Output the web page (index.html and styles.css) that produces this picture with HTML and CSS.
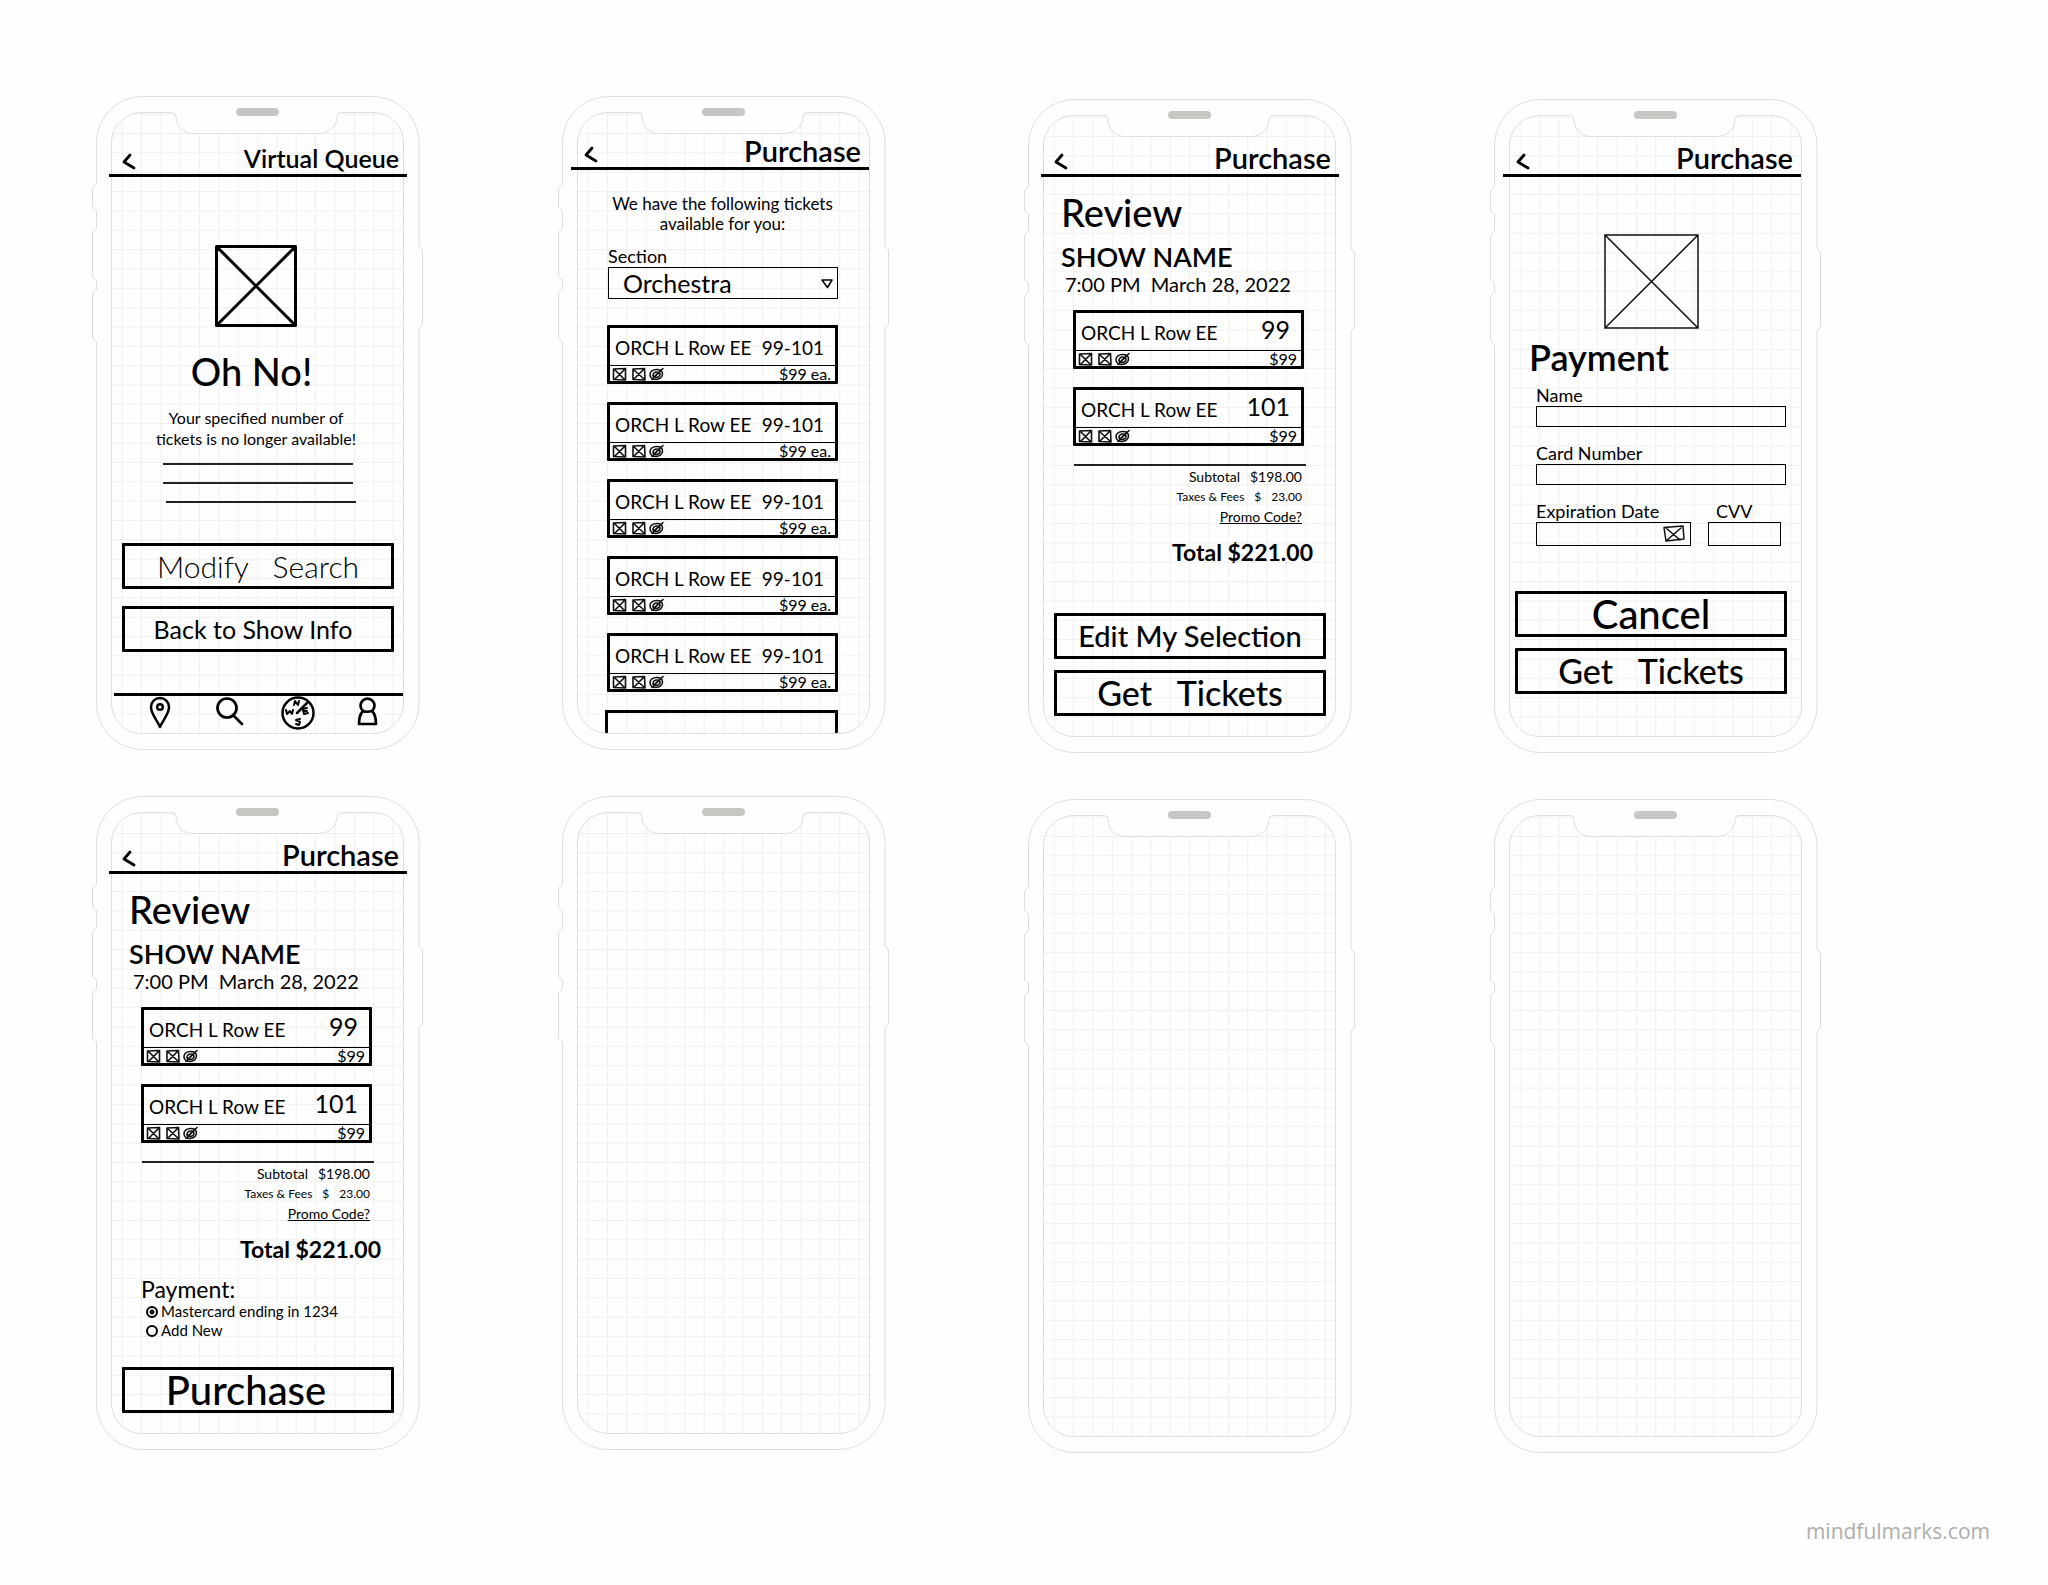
FILE: index.html
```html
<!DOCTYPE html>
<html lang="en">
<head>
<meta charset="utf-8">
<meta name="viewport" content="width=device-width, initial-scale=1">
<title>Ticket purchase wireframes</title>
<link rel="stylesheet" href="styles.css">
</head>
<body>
<svg class="sprite" aria-hidden="true">
  <defs>
    <pattern id="grid" x="25.7" y="75.7" width="19.35" height="19.35" patternUnits="userSpaceOnUse">
      <path d="M.5 0V19.35M0 .5H19.35" fill="none" stroke="#efefed"/>
    </pattern>
  </defs>
  <symbol id="device" viewBox="-5 0 333 655">
    <g fill="none" stroke="#dededc">
      <path d="M47 .5H276C302 .5 323 21 323 47V150L326.500 154V228L323 232V607C323 633 302 653.500 276 653.500H47C21 653.500 .5 633 .5 607V246L-3.500 242V197L.5 193V184L-3.500 181V136L.5 132V115L-3.500 111V92L.5 88V47C.5 21 21 .5 47 .5Z"/>
      <path fill="url(#grid)" d="M46 16.500H76Q80 16.500 80 20.500C80 30 87 37.500 97 37.500H223C233 37.500 241 30 241 20.500Q241 16.500 245 16.500H277C294 16.500 307.500 30 307.500 47V607C307.500 624 294 637.500 277 637.500H46C29 637.500 15.500 624 15.500 607V47C15.500 30 29 16.500 46 16.500Z"/>
    </g>
    <rect x="140" y="12" width="43" height="8" rx="4" fill="#c6c6c3"/>
  </symbol>
  <symbol id="back" viewBox="0 0 14 17">
    <path d="M8 2 2 9l10 6" fill="none" stroke="#000" stroke-width="2.800" stroke-linecap="round" stroke-linejoin="round"/>
  </symbol>
  <symbol id="amenities" viewBox="0 0 52 14">
    <g fill="none" stroke="#111" stroke-width="1.600" stroke-linecap="round" stroke-linejoin="round">
      <path d="M1.500 2 13.500 1.500V13L1.500 12.500ZM2 2l10 10M12 3 3 12M21 2l11.500-.5L33 13 21 12.500ZM22 3l10 9M31 3l-9 9"/>
      <path d="M38 7.500c0-3 3-5 6.500-5s6 1.500 6 4.500-3 5.500-6.500 5.500-6-2-6-5ZM40 12.500 51 1.500M41 9c0-3 2-4 4-4s3 1 3 2.500-2 3-4 3-3-1-3-2.500ZM42 10l5-5"/>
    </g>
  </symbol>
</svg>

<main class="board">

  <section class="phone phone--queue">
    <svg class="device" aria-hidden="true"><use href="#device"/></svg>
    <header class="bar">
      <a class="back" href="#" aria-label="Back"><svg width="14" height="17" aria-hidden="true"><use href="#back"/></svg></a>
      <h2 class="bar-title bar-title--small">Virtual Queue</h2>
    </header>
    <svg class="picture" width="82" height="82" viewBox="0 0 82 82" aria-hidden="true">
      <path d="M1.500 1.500H80.500V80.500H1.500ZM1.500 1.500 80.500 80.500M80.500 1.500 1.500 80.500" fill="none" stroke="#000" stroke-width="3" stroke-linejoin="round"/>
    </svg>
    <h3 class="alert">Oh No!</h3>
    <p class="notice">Your specified number of<br>tickets is no longer available!</p>
    <div class="filler"><span></span><span></span><span></span></div>
    <div class="actions">
      <button class="button button--thin" type="button">Modify &nbsp; Search</button>
      <button class="button button--light" type="button">Back to Show Info</button>
    </div>
    <nav class="tabs">
      <a href="#" aria-label="Venues">
        <svg width="34" height="34" viewBox="0 0 34 34" fill="none" stroke="#000" stroke-width="2.500" stroke-linejoin="round" aria-hidden="true"><path d="M17 31C14 24 8 18 8 11a9 9 0 0 1 18 0c0 7-6 13-9 20Z"/><circle cx="17" cy="11" r="2.800"/></svg>
      </a>
      <a href="#" aria-label="Search">
        <svg width="34" height="34" viewBox="0 0 34 34" fill="none" stroke="#000" stroke-width="2.700" stroke-linecap="round" aria-hidden="true"><circle cx="15" cy="12" r="9.500"/><path d="m21 19 9 9"/></svg>
      </a>
      <a href="#" aria-label="Explore">
        <svg width="34" height="34" viewBox="0 0 34 34" fill="none" stroke="#000" stroke-width="2.500" stroke-linecap="round" stroke-linejoin="round" aria-hidden="true"><circle cx="17" cy="17" r="15.500"/><path d="M16 17 26 7"/><path stroke-width="2" d="m13 9 1-4 3 4 1-4M5 14l1 4 3-3 2 3 1-4M26 12l-4 1 1 5 4-1M22 15h4M19 23l-4 1 4 2-1 3-3-1"/></svg>
      </a>
      <a href="#" aria-label="Account">
        <svg width="34" height="34" viewBox="0 0 34 34" fill="none" stroke="#000" stroke-width="2.700" stroke-linejoin="round" aria-hidden="true"><path d="M13 15a7 7 0 1 1 9 0c3 3 4 8 4 13H9c0-5 1-10 4-13Zm0 0q4 1.500 9 0"/></svg>
      </a>
    </nav>
  </section>

  <section class="phone phone--tickets">
    <svg class="device" aria-hidden="true"><use href="#device"/></svg>
    <header class="bar bar--left">
      <a class="back" href="#" aria-label="Back"><svg width="14" height="17" aria-hidden="true"><use href="#back"/></svg></a>
      <h2 class="bar-title">Purchase</h2>
    </header>
    <p class="intro">We have the following tickets<br>available for you:</p>
    <div class="picker">
      <label for="section">Section</label>
      <div class="select">
        <select id="section"><option>Orchestra</option></select>
        <svg class="caret" width="12" height="10" viewBox="0 0 12 10" aria-hidden="true"><path d="M1 1H11L6.500 8.500Z" fill="none" stroke="#000" stroke-width="1.500" stroke-linejoin="round"/></svg>
      </div>
    </div>
    <ul class="tickets tickets--list">
      <li class="ticket"><div class="seat"><span>ORCH L Row EE</span><span>99-101</span></div><div class="price"><svg width="52" height="14" aria-hidden="true"><use href="#amenities"/></svg><span>$99 ea.</span></div></li>
      <li class="ticket"><div class="seat"><span>ORCH L Row EE</span><span>99-101</span></div><div class="price"><svg width="52" height="14" aria-hidden="true"><use href="#amenities"/></svg><span>$99 ea.</span></div></li>
      <li class="ticket"><div class="seat"><span>ORCH L Row EE</span><span>99-101</span></div><div class="price"><svg width="52" height="14" aria-hidden="true"><use href="#amenities"/></svg><span>$99 ea.</span></div></li>
      <li class="ticket"><div class="seat"><span>ORCH L Row EE</span><span>99-101</span></div><div class="price"><svg width="52" height="14" aria-hidden="true"><use href="#amenities"/></svg><span>$99 ea.</span></div></li>
      <li class="ticket"><div class="seat"><span>ORCH L Row EE</span><span>99-101</span></div><div class="price"><svg width="52" height="14" aria-hidden="true"><use href="#amenities"/></svg><span>$99 ea.</span></div></li>
      <li class="ticket ticket--cut"></li>
    </ul>
  </section>

  <section class="phone phone--low">
    <svg class="device" aria-hidden="true"><use href="#device"/></svg>
    <header class="bar">
      <a class="back" href="#" aria-label="Back"><svg width="14" height="17" aria-hidden="true"><use href="#back"/></svg></a>
      <h2 class="bar-title">Purchase</h2>
    </header>
    <div class="show">
      <h3 class="review">Review</h3>
      <p class="show-name">SHOW NAME</p>
      <p class="show-date">7:00 PM &nbsp;March 28, 2022</p>
    </div>
    <ul class="tickets">
      <li class="ticket"><div class="seat"><span>ORCH L Row EE</span><span class="number">99</span></div><div class="price"><svg width="52" height="14" aria-hidden="true"><use href="#amenities"/></svg><span>$99</span></div></li>
      <li class="ticket"><div class="seat"><span>ORCH L Row EE</span><span class="number">101</span></div><div class="price"><svg width="52" height="14" aria-hidden="true"><use href="#amenities"/></svg><span>$99</span></div></li>
    </ul>
    <div class="receipt">
      <p class="line"><span>Subtotal</span><span>$198.00</span></p>
      <p class="line line--small"><span>Taxes &amp; Fees</span><span>$</span><span>23.00</span></p>
      <p class="line line--promo"><a href="#">Promo Code?</a></p>
      <p class="total">Total $221.00</p>
    </div>
    <div class="actions actions--close">
      <button class="button button--edit" type="button">Edit My Selection</button>
      <button class="button" type="button">Get &nbsp; Tickets</button>
    </div>
  </section>

  <section class="phone phone--low">
    <svg class="device" aria-hidden="true"><use href="#device"/></svg>
    <header class="bar bar--left">
      <a class="back" href="#" aria-label="Back"><svg width="14" height="17" aria-hidden="true"><use href="#back"/></svg></a>
      <h2 class="bar-title">Purchase</h2>
    </header>
    <svg class="picture picture--card" width="95" height="95" viewBox="0 0 95 95" aria-hidden="true">
      <path d="M1 1H94V94H1ZM1 1 94 94M94 1 1 94" fill="none" stroke="#111" stroke-width="1.500"/>
    </svg>
    <h3 class="pay-title">Payment</h3>
    <form class="form">
      <div class="field"><label for="name">Name</label><input id="name" type="text"></div>
      <div class="field"><label for="card">Card Number</label><input id="card" type="text"></div>
      <div class="pair">
        <div class="field field--date"><label for="expiry">Expiration Date</label><input id="expiry" type="text">
          <svg class="calendar" width="22" height="18" viewBox="0 0 22 18" aria-hidden="true"><path d="M1 2.500 20 1l1 13L3 16ZM3 3l14 12M18 3 3 16" fill="none" stroke="#111" stroke-width="1.500" stroke-linejoin="round" stroke-linecap="round"/></svg>
        </div>
        <div class="field field--cvv"><label for="cvv">CVV</label><input id="cvv" type="text"></div>
      </div>
    </form>
    <div class="actions actions--close actions--left">
      <button class="button button--large" type="button">Cancel</button>
      <button class="button" type="button">Get &nbsp; Tickets</button>
    </div>
  </section>

  <section class="phone">
    <svg class="device" aria-hidden="true"><use href="#device"/></svg>
    <header class="bar">
      <a class="back" href="#" aria-label="Back"><svg width="14" height="17" aria-hidden="true"><use href="#back"/></svg></a>
      <h2 class="bar-title">Purchase</h2>
    </header>
    <div class="show">
      <h3 class="review">Review</h3>
      <p class="show-name">SHOW NAME</p>
      <p class="show-date">7:00 PM &nbsp;March 28, 2022</p>
    </div>
    <ul class="tickets">
      <li class="ticket"><div class="seat"><span>ORCH L Row EE</span><span class="number">99</span></div><div class="price"><svg width="52" height="14" aria-hidden="true"><use href="#amenities"/></svg><span>$99</span></div></li>
      <li class="ticket"><div class="seat"><span>ORCH L Row EE</span><span class="number">101</span></div><div class="price"><svg width="52" height="14" aria-hidden="true"><use href="#amenities"/></svg><span>$99</span></div></li>
    </ul>
    <div class="receipt">
      <p class="line"><span>Subtotal</span><span>$198.00</span></p>
      <p class="line line--small"><span>Taxes &amp; Fees</span><span>$</span><span>23.00</span></p>
      <p class="line line--promo"><a href="#">Promo Code?</a></p>
      <p class="total">Total $221.00</p>
    </div>
    <fieldset class="methods">
      <legend>Payment:</legend>
      <label><input type="radio" name="method" checked>Mastercard ending in 1234</label>
      <label><input type="radio" name="method">Add New</label>
    </fieldset>
    <div class="actions actions--last">
      <button class="button button--large" type="button">Purchase</button>
    </div>
  </section>

  <section class="phone"><svg class="device" aria-hidden="true"><use href="#device"/></svg></section>
  <section class="phone phone--low"><svg class="device" aria-hidden="true"><use href="#device"/></svg></section>
  <section class="phone phone--low"><svg class="device" aria-hidden="true"><use href="#device"/></svg></section>
</main>

<footer class="credit"><a href="#">mindfulmarks.com</a></footer>
</body>
</html>
```
FILE: styles.css
```css
:root {
  --hand: Lato, "Open Sans", sans-serif;
}

* { box-sizing: border-box; }

body {
  margin: 0;
  background: #fefefe;
  color: #000;
  font-family: var(--hand);
}

h2, h3, p, ul, fieldset, legend { margin: 0; padding: 0; }
ul { list-style: none; }
svg { display: block; }
a { color: inherit; text-decoration: none; }
.sprite { position: absolute; width: 0; height: 0; }

.board {
  display: grid;
  grid-template-columns: repeat(auto-fill, 323px);
  gap: 43px 143px;
  padding: 96px 96px 0;
}

.phone {
  position: relative;
  display: flex;
  flex-direction: column;
  min-height: 654px;
}
.phone--low { margin-top: 3px; }

.device {
  position: absolute;
  z-index: -1;
  top: 0;
  left: -5px;
  width: 333px;
  height: 655px;
}

/* Title bar */
.bar {
  display: flex;
  align-items: flex-end;
  justify-content: space-between;
  height: 78px;
  margin: 0 12px 0 13px;
  padding: 0 8px 0 13px;
  border-bottom: 3px solid #000;
}
.bar--left { margin: 0 16px 0 9px; }
.phone--queue .bar { height: 81px; }
.phone--tickets .bar { height: 74px; }
.back { padding-bottom: 4px; }
.bar-title { font-size: 29px; line-height: 32px; font-weight: 600; }
.bar-title--small { font-size: 25px; }

/* Queue */
.picture { margin: 68px auto 0 119px; }
.picture--card { margin: 57px auto 0 110px; }
.alert { margin: 20px 12px 0 0; text-align: center; font-size: 38px; line-height: 48px; font-weight: 500; }
.notice { margin: 12px 3px 0 0; text-align: center; font-size: 16px; line-height: 21px; }
.filler { display: grid; gap: 17px; margin: 14px 66px 0 67px; }
.filler span { height: 2px; background: #222; }
.filler span:last-child { margin: 0 -3px 0 3px; }

.actions { display: grid; gap: 17px; margin: 40px 25px 0 26px; }
.actions--close { gap: 11px; margin-top: 46px; }
.actions--left { margin: 45px 30px 0 21px; }
.actions--last { margin-top: 27px; }
.button {
  height: 46px;
  padding: 0;
  border: 3px solid #000;
  border-radius: 1px;
  background: none;
  color: #000;
  font: 500 34px/40px var(--hand);
}
.button--thin { font-size: 30px; font-weight: 300; }
.button--light { padding-right: 10px; font-size: 25px; font-weight: 400; }
.button--edit { font-size: 29px; }
.button--large { font-size: 40px; line-height: 38px; }
.actions--last .button { padding-right: 24px; }

.tabs {
  display: grid;
  grid-template-columns: repeat(4, 1fr);
  justify-items: center;
  margin: 41px 16px 0 18px;
  padding: 0 2px 0 12px;
  border-top: 3px solid #000;
}

/* Tickets */
.intro { margin: 24px 2px 0 0; text-align: center; font-size: 17px; line-height: 20px; }
.picker { margin: 11px 47px 0 46px; }
.picker label { display: block; font-size: 18px; line-height: 22px; }
.select { position: relative; }
.select select {
  display: block;
  width: 100%;
  height: 32px;
  padding: 0 14px;
  appearance: none;
  border: 1px solid #000;
  border-radius: 0;
  background: none;
  color: #000;
  font: 400 25px/28px var(--hand);
}
.caret { position: absolute; top: 12px; right: 5px; }

.tickets { display: grid; gap: 18px; margin: 16px 47px 0 45px; }
.tickets--list { margin-top: 26px; }
.ticket { height: 59px; border: 3px solid #000; border-radius: 1px; }
.seat {
  display: flex;
  justify-content: space-between;
  height: 38px;
  padding: 2px 11px 0 5px;
  border-bottom: 1px solid #000;
  font-size: 19px;
  line-height: 36px;
  white-space: nowrap;
}
.number { font-size: 25px; line-height: 28px; }
.price {
  display: flex;
  align-items: center;
  justify-content: space-between;
  height: 15px;
  padding: 0 4px 0 2px;
  font-size: 16px;
  line-height: 14px;
}
.ticket--cut { height: 23px; margin-left: -2px; border-bottom: 0; }

/* Review */
.show { margin: 15px 0 0 33px; }
.review { font-size: 38px; line-height: 40px; font-weight: 500; }
.show-name { margin-top: 8px; font-size: 27px; line-height: 34px; font-weight: 600; }
.show-date { padding-left: 4px; font-size: 20px; line-height: 20px; }

.receipt { margin: 18px 38px 0 46px; text-align: right; }
.receipt::before { content: ""; display: block; height: 2px; margin: 0 7px 1px 0; background: #222; }
.line { display: flex; justify-content: flex-end; gap: 10px; padding-right: 11px; font-size: 14px; line-height: 20px; }
.line--small { font-size: 12px; }
.line--promo a { text-decoration: underline; }
.total { margin-top: 10px; font-size: 23px; line-height: 30px; font-weight: 700; }

.methods { margin: 12px 0 0 45px; border: 0; min-width: 0; }
.methods legend { font-size: 23px; line-height: 26px; }
.methods label { display: flex; align-items: center; gap: 3px; padding-left: 5px; font-size: 15px; line-height: 19px; }
.methods input {
  width: 12px;
  height: 12px;
  margin: 0;
  appearance: none;
  border: 2px solid #000;
  border-radius: 50%;
}
.methods input:checked { background: radial-gradient(circle, #000 2px, transparent 3px); }

/* Payment form */
.pay-title { margin: 8px 0 0 35px; font-size: 36px; line-height: 40px; font-weight: 600; }
.form { display: grid; gap: 15px; margin: 7px 31px 0 42px; }
.field { position: relative; display: grid; }
.field label { font-size: 18px; line-height: 22px; }
.field input {
  width: 100%;
  height: 21px;
  padding: 0 4px;
  border: 1px solid #000;
  border-radius: 0;
  background: none;
}
.pair { display: grid; grid-template-columns: 155px 73px; gap: 17px; }
.pair input { height: 24px; }
.field--cvv label { padding-left: 8px; }
.calendar { position: absolute; right: 6px; bottom: 3px; }

.credit { padding: 63px 58px 24px; text-align: right; color: #aeaeac; font: 400 21px/30px "Open Sans", sans-serif; }
```
